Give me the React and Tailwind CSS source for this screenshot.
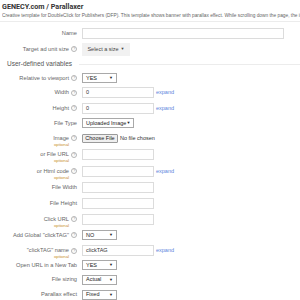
import React from 'react';

const Help = () => (
  <span className="ml-[2px] flex h-[6px] w-[6px] shrink-0 items-center justify-center rounded-full border border-[#b5b5b5] text-[4px] leading-none text-[#999]">
    ?
  </span>
);

const Row = ({ label, help, optional, h, children }) => (
  <div className="flex items-center" style={{ height: h }}>
    <div className="flex w-[77px] shrink-0 items-center justify-end">
      <div className="flex flex-col items-end">
        <span className="whitespace-nowrap text-[5.7px] leading-[7px] text-[#666]">{label}</span>
        {optional && (
          <span className="-mb-[6px] text-[4.3px] leading-[6px] text-[#c8902e]">optional</span>
        )}
      </div>
      {help && <Help />}
    </div>
    <div className="ml-[5px] flex items-center">{children}</div>
  </div>
);

const TextInput = ({ value, wide }) => (
  <div
    className={
      'flex h-[11px] items-center border border-[#dcdcdc] bg-white pl-[3px] text-[5.5px] text-[#333] ' +
      (wide ? 'w-[202px]' : 'w-[72px]')
    }
  >
    {value}
  </div>
);

const Select = ({ value, wide }) => (
  <div
    className={
      'flex h-[10px] items-center justify-between whitespace-nowrap border border-[#a9a9a9] bg-white px-[3px] text-[5.5px] text-[#222] ' +
      (wide ? 'w-[52px]' : 'w-[35px]')
    }
  >
    <span>{value}</span>
    <span className="text-[4px]">▼</span>
  </div>
);

const Expand = () => <span className="ml-[2px] text-[5.5px] text-[#5b84dc]">expand</span>;

export default function App() {
  return (
    <div className="h-[300px] w-[300px] overflow-hidden bg-white font-['Liberation_Sans',Arial,sans-serif]">
      <div className="h-[22px] border-b border-[#ececec] pl-[2px]">
        <div className="h-[13px] pt-[2px] text-[7.2px] font-bold leading-[9px] text-[#333] font-['Roboto',sans-serif]">
          GENECY.com / Parallaxer
        </div>
        <div className="h-[8px] overflow-hidden whitespace-nowrap text-[4.8px] leading-[6px] text-[#666]">
          Creative template for DoubleClick for Publishers (DFP). This template shows banner with parallax effect. While scrolling down the page, the image moves
        </div>
      </div>
      <div className="pt-[3px]">
        <Row label="Name" h={16}>
          <TextInput wide />
        </Row>
        <Row label="Target ad unit size" help h={16}>
          <div className="flex h-[13px] w-[48px] items-center justify-center whitespace-nowrap bg-[#f1f1f1] text-[5.5px] text-[#444]">
            Select a size <span className="ml-[2px] text-[4px]">▼</span>
          </div>
        </Row>
        <div className="flex h-[14px] items-center pl-[7px]">
          <span className="whitespace-nowrap text-[6.5px] text-[#555]">User-defined variables</span>
          <div className="ml-[7px] h-px flex-1 bg-[#ececec]" />
        </div>
        <Row label="Relative to viewport" help h={14}>
          <Select value="YES" />
        </Row>
        <Row label="Width" help h={15}>
          <TextInput value="0" />
          <Expand />
        </Row>
        <Row label="Height" help h={16}>
          <TextInput value="0" />
          <Expand />
        </Row>
        <Row label="File Type" h={14}>
          <Select value="Uploaded Image" wide />
        </Row>
        <Row label="Image" help optional h={16}>
          <div className="flex h-[9px] w-[36px] items-center justify-center whitespace-nowrap rounded-[1px] border border-[#9a9a9a] bg-[#efefef] text-[5.5px] text-[#222]">
            Choose File
          </div>
          <span className="ml-[2px] whitespace-nowrap text-[5.5px] text-[#333]">No file chosen</span>
        </Row>
        <Row label="or File URL" help optional h={17}>
          <TextInput />
        </Row>
        <Row label="or Html code" help optional h={16}>
          <TextInput />
          <Expand />
        </Row>
        <Row label="File Width" h={16}>
          <TextInput />
        </Row>
        <Row label="File Height" h={16}>
          <TextInput />
        </Row>
        <Row label="Click URL" help optional h={16}>
          <TextInput />
        </Row>
        <Row label={'Add Global "clickTAG"'} help h={16}>
          <Select value="NO" />
        </Row>
        <Row label={'"clickTAG" name'} help optional h={15}>
          <TextInput value="clickTAG" />
          <Expand />
        </Row>
        <Row label="Open URL in a New Tab" h={14}>
          <Select value="YES" />
        </Row>
        <Row label="File sizing" h={15}>
          <Select value="Actual" />
        </Row>
        <Row label="Parallax effect" h={15}>
          <Select value="Fixed" />
        </Row>
      </div>
    </div>
  );
}
